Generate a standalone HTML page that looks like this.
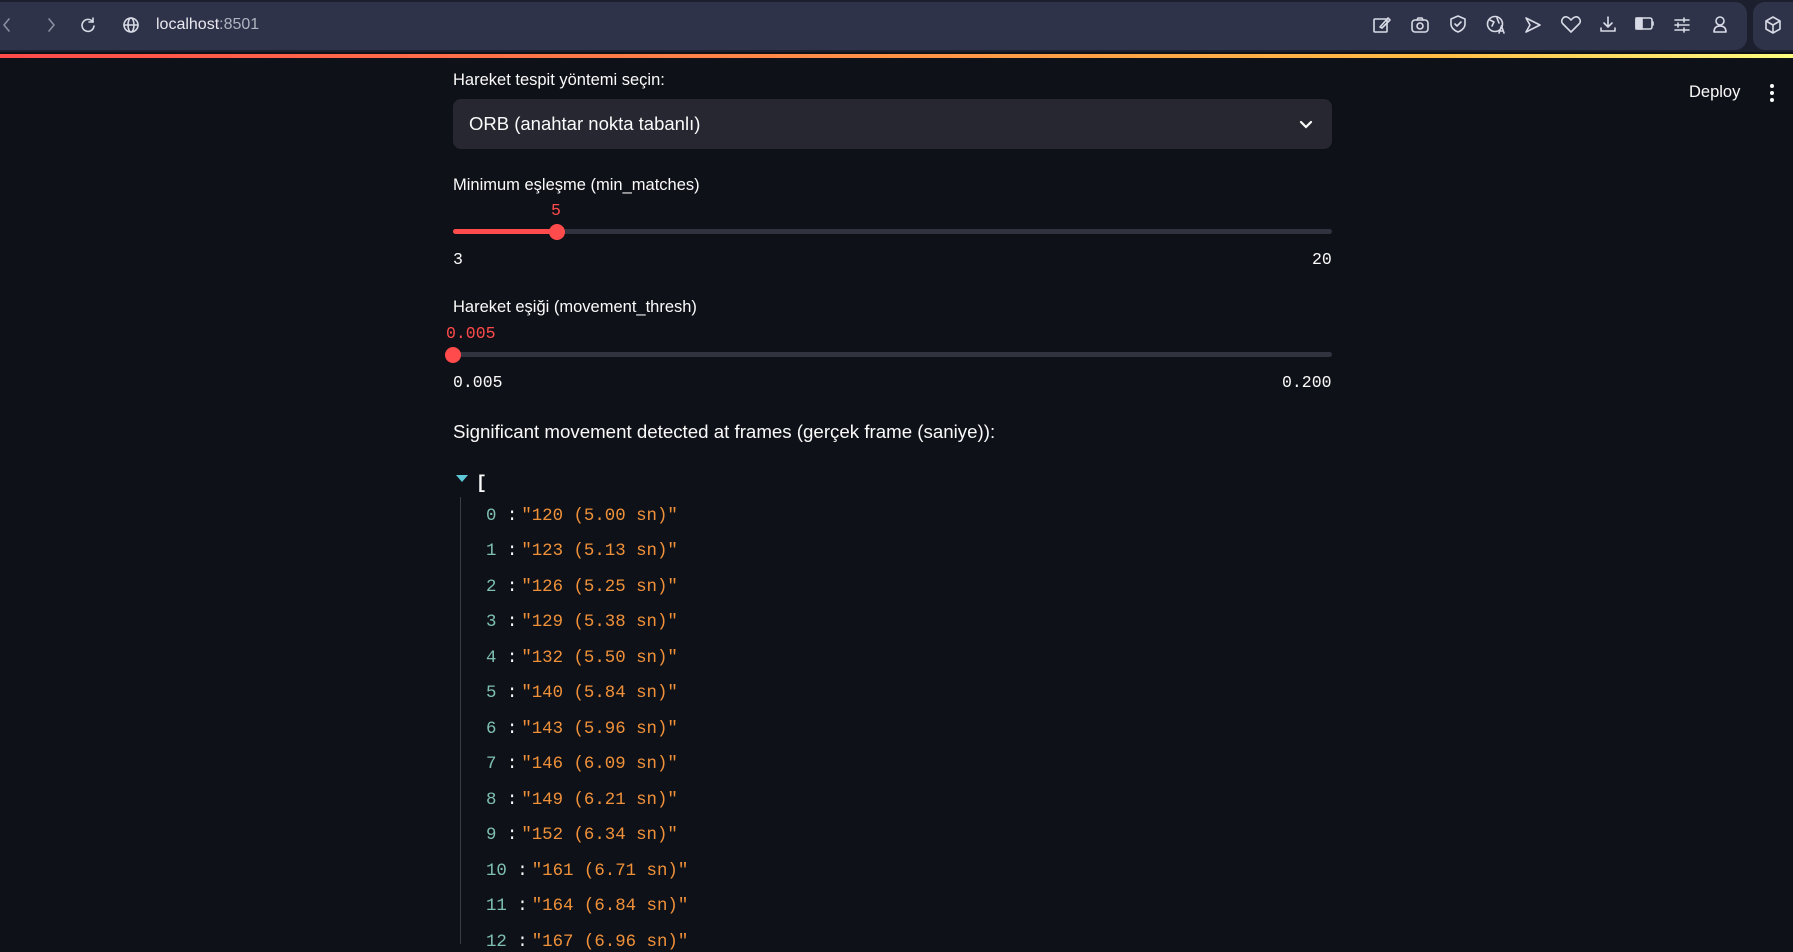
<!DOCTYPE html>
<html><head><meta charset="utf-8"><style>
*{box-sizing:border-box;margin:0;padding:0}
body{width:1793px;height:944px;overflow:hidden;background:#0e1117;font-family:"Liberation Sans",sans-serif;color:#fafafa;position:relative}
.abs{position:absolute}
.bar{left:0;top:0;width:1793px;height:52px;background:#1c1f2e}
.bar1{left:0;top:2px;width:1747px;height:48px;background:#2f3349;border-radius:0 12px 12px 0}
.bar2{left:1753px;top:2px;width:60px;height:48px;background:#2f3349;border-radius:12px 0 0 12px}
.grad{left:0;top:54px;width:1793px;height:4px;background:linear-gradient(90deg,#ff4b4b,#ffbd45 80%,#fffd80)}
svg.i{position:absolute;fill:none;stroke:#d8dbe6;stroke-width:1.6;stroke-linecap:round;stroke-linejoin:round}
.lbl{font-size:16.5px;color:#fafafa;left:453px}
.mono{font-family:"Liberation Mono",monospace}
.track{left:453px;width:879px;height:5px;background:#31333f;border-radius:3px}
.thumb{width:16px;height:16px;border-radius:50%;background:#ff4b4b}
.row{left:486px;font-family:"Liberation Mono",monospace;font-size:17.4px;white-space:pre}
.k{color:#7fc0b4}.s{color:#f0913a;display:inline-block;margin-left:4px}
</style></head><body>
<div class="abs bar"></div><div class="abs bar1"></div><div class="abs bar2"></div>
<svg class="i" style="left:0;top:16px" width="14" height="18"><path d="M9 3 L4 9 L9 15" stroke="#8a8ea0"/></svg>
<svg class="i" style="left:44px;top:16px" width="14" height="18"><path d="M5 3 L10 9 L5 15" stroke="#8a8ea0"/></svg>
<svg class="i" style="left:79px;top:16px" width="18" height="18"><path d="M14 6 A6 6 0 1 0 15 10"/><path d="M14 2 V6 H10"/></svg>
<svg class="i" style="left:122px;top:16px" width="18" height="18"><circle cx="9" cy="9" r="7"/><ellipse cx="9" cy="9" rx="3" ry="7"/><path d="M2 9 H16"/></svg>
<div class="abs" style="left:156px;top:16px;font-size:16px;color:#e8e8ee">localhost<span style="color:#b0b3c0">:8501</span></div>
<svg class="i" style="left:1372px;top:15px" width="20" height="20"><rect x="2" y="4" width="13" height="13" rx="1"/><path d="M8 12 L16 3 L18 5 L10 13 Z"/></svg>
<svg class="i" style="left:1410px;top:15px" width="20" height="20"><rect x="2" y="5" width="16" height="12" rx="3"/><circle cx="10" cy="11" r="3"/><path d="M7 5 L8 3 H12 L13 5"/></svg>
<svg class="i" style="left:1448px;top:14px" width="20" height="20"><path d="M10 2 L17 5 V10 C17 14 13 17 10 18 C7 17 3 14 3 10 V5 Z"/><path d="M7 10 L9 12 L13 8"/></svg>
<svg class="i" style="left:1485px;top:14px" width="22" height="22"><circle cx="10" cy="10" r="7.5"/><path d="M5 6 L9 8 L7 12 M12 4 L14 9" /><path d="M14 19 L16.5 12 L19 19 M15 17 H18"/></svg>
<svg class="i" style="left:1523px;top:15px" width="20" height="20"><path d="M3 3 L17 10 L3 17 L7 10 Z"/></svg>
<svg class="i" style="left:1560px;top:15px" width="22" height="20"><path d="M11 17 L3 9 C0 6 3 1 7 2 C9 2.5 10 4 11 5 C12 4 13 2.5 15 2 C19 1 22 6 19 9 Z"/></svg>
<svg class="i" style="left:1598px;top:14px" width="20" height="20"><path d="M10 3 V13 M6 9 L10 13 L14 9 M3 14 V17 H17 V14"/></svg>
<svg class="i" style="left:1634px;top:15px" width="22" height="18"><rect x="2" y="3" width="16" height="11" rx="2"/><rect x="2" y="3" width="6" height="11" fill="#d8dbe6"/><path d="M19 7 V10"/></svg>
<svg class="i" style="left:1672px;top:15px" width="20" height="20"><path d="M3 5 H17 M3 10 H17 M3 15 H17 M12 3 V7 M6 8 V12 M12 13 V17"/></svg>
<svg class="i" style="left:1710px;top:14px" width="20" height="20"><circle cx="10" cy="7" r="4"/><path d="M4 18 C4 13 7 12 10 12 C13 12 16 13 16 18 Z"/></svg>
<svg class="i" style="left:1763px;top:15px" width="20" height="20"><path d="M10 2 L17 6 V14 L10 18 L3 14 V6 Z M3 6 L10 10 L17 6 M10 10 V18"/></svg>
<div class="abs grad"></div>

<div class="abs" style="left:1689px;top:83px;font-size:16.5px">Deploy</div>
<svg class="abs" style="left:1766px;top:83px" width="12" height="20"><circle cx="6" cy="3" r="2" fill="#fafafa"/><circle cx="6" cy="10" r="2" fill="#fafafa"/><circle cx="6" cy="17" r="2" fill="#fafafa"/></svg>

<div class="abs lbl" style="top:71px">Hareket tespit yöntemi seçin:</div>
<div class="abs" style="left:453px;top:99px;width:879px;height:50px;background:#262730;border-radius:8px"></div>
<div class="abs" style="left:469px;top:113px;font-size:18.5px">ORB (anahtar nokta tabanlı)</div>
<svg class="abs" style="left:1298px;top:117px" width="16" height="16"><path d="M3 5 L8 10 L13 5" fill="none" stroke="#fafafa" stroke-width="2.2" stroke-linecap="round"/></svg>

<div class="abs lbl" style="top:176px">Minimum eşleşme (min_matches)</div>
<div class="abs mono" style="left:551px;top:201px;font-size:16.5px;color:#ff4b4b">5</div>
<div class="abs track" style="top:229px"></div>
<div class="abs" style="left:453px;top:229px;width:104px;height:5px;background:#ff4b4b;border-radius:3px"></div>
<div class="abs thumb" style="left:549px;top:224px"></div>
<div class="abs mono" style="left:453px;top:250px;font-size:16.5px">3</div>
<div class="abs mono" style="left:1312px;top:250px;font-size:16.5px">20</div>

<div class="abs lbl" style="top:298px">Hareket eşiği (movement_thresh)</div>
<div class="abs mono" style="left:446px;top:324px;font-size:16.5px;color:#ff4b4b">0.005</div>
<div class="abs track" style="top:352px"></div>
<div class="abs thumb" style="left:445px;top:347px"></div>
<div class="abs mono" style="left:453px;top:373px;font-size:16.5px">0.005</div>
<div class="abs mono" style="left:1282px;top:373px;font-size:16.5px">0.200</div>

<div class="abs" style="left:453px;top:421px;font-size:18.7px">Significant movement detected at frames (gerçek frame (saniye)):</div>

<svg class="abs" style="left:455px;top:474px" width="14" height="10"><path d="M1 1 L13 1 L7 8 Z" fill="#5ec8d8"/></svg>
<div class="abs mono" style="left:476px;top:474px;font-size:18px;font-weight:bold">[</div>
<div class="abs" style="left:460px;top:497px;width:1px;height:447px;background:#3a3d48"></div>

<div class="abs row" style="top:507px"><span class="k">0</span> :<span class="s">"120 (5.00 sn)"</span></div>
<div class="abs row" style="top:542px"><span class="k">1</span> :<span class="s">"123 (5.13 sn)"</span></div>
<div class="abs row" style="top:578px"><span class="k">2</span> :<span class="s">"126 (5.25 sn)"</span></div>
<div class="abs row" style="top:613px"><span class="k">3</span> :<span class="s">"129 (5.38 sn)"</span></div>
<div class="abs row" style="top:649px"><span class="k">4</span> :<span class="s">"132 (5.50 sn)"</span></div>
<div class="abs row" style="top:684px"><span class="k">5</span> :<span class="s">"140 (5.84 sn)"</span></div>
<div class="abs row" style="top:720px"><span class="k">6</span> :<span class="s">"143 (5.96 sn)"</span></div>
<div class="abs row" style="top:755px"><span class="k">7</span> :<span class="s">"146 (6.09 sn)"</span></div>
<div class="abs row" style="top:791px"><span class="k">8</span> :<span class="s">"149 (6.21 sn)"</span></div>
<div class="abs row" style="top:826px"><span class="k">9</span> :<span class="s">"152 (6.34 sn)"</span></div>
<div class="abs row" style="top:862px"><span class="k">10</span> :<span class="s">"161 (6.71 sn)"</span></div>
<div class="abs row" style="top:897px"><span class="k">11</span> :<span class="s">"164 (6.84 sn)"</span></div>
<div class="abs row" style="top:933px"><span class="k">12</span> :<span class="s">"167 (6.96 sn)"</span></div>
</body></html>
